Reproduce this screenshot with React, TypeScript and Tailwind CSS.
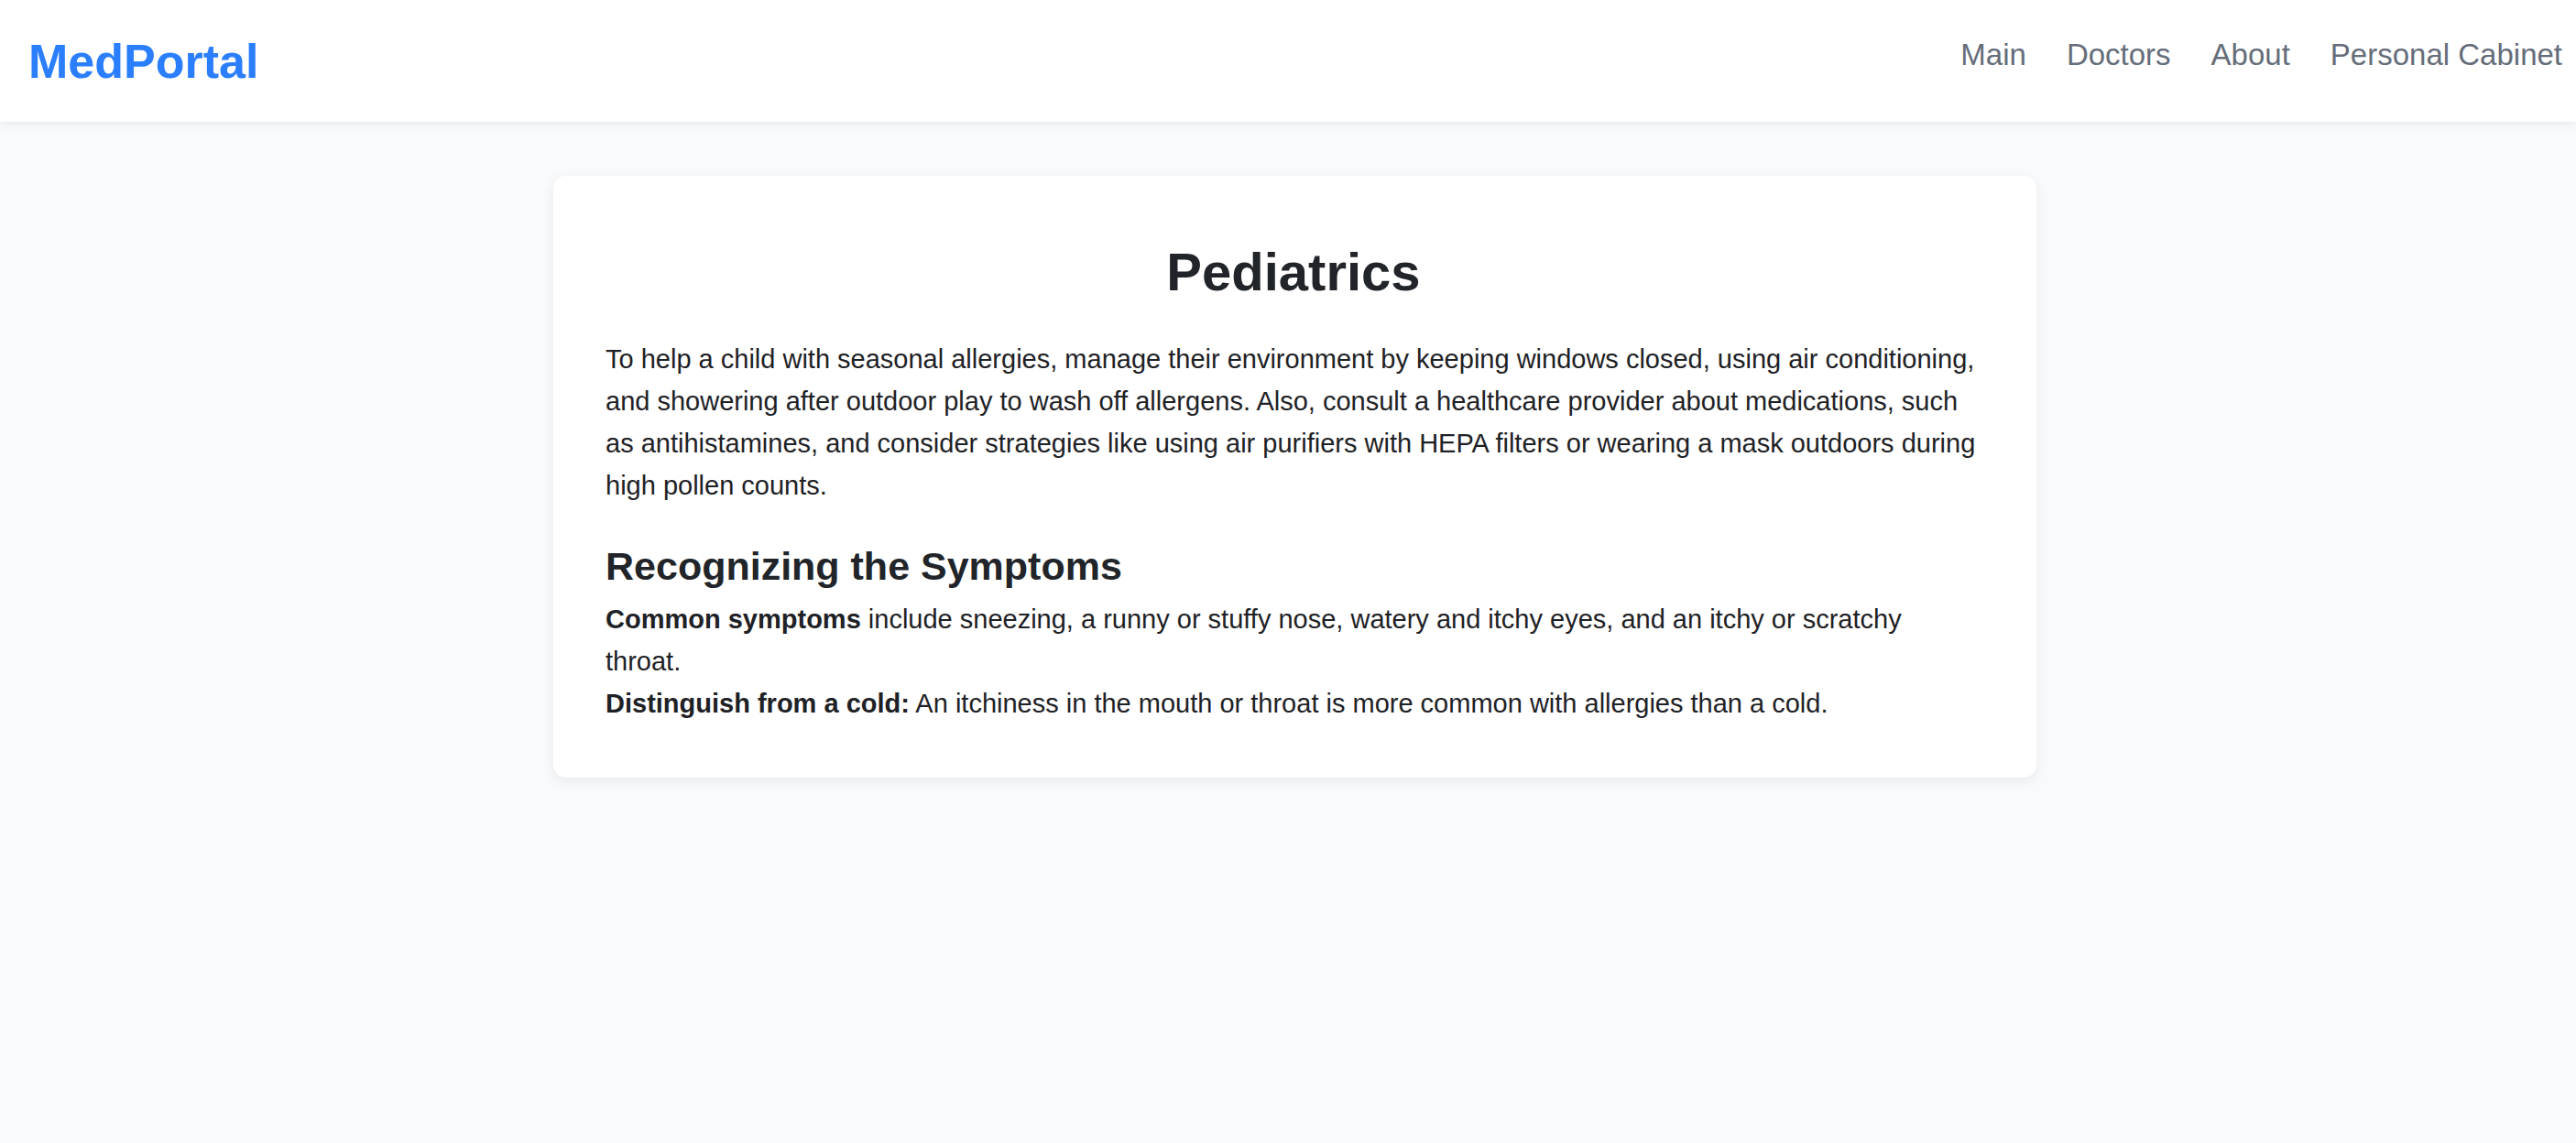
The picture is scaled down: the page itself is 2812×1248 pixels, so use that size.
import React from 'react'

const navLinks = ['Main', 'Doctors', 'About', 'Personal Cabinet']

const App = () => {
    return (
        <div className="min-h-screen bg-[#f9fafb] font-['Liberation_Sans',Arial,sans-serif]">
            {/* Header */}
            <header className="h-[133px] bg-white shadow-[0_3px_8px_rgba(0,0,0,0.07)] flex items-center justify-between pl-[31px] pr-[15px]">
                <a href="#" className="text-[52px] font-bold leading-none text-[#2b7fff]">MedPortal</a>
                <nav className="flex items-center gap-[44px] mb-[14px]">
                    {navLinks.map((link) => (
                        <a key={link} href="#" className="text-[33px] font-medium leading-none text-[#656d7a]">
                            {link}
                        </a>
                    ))}
                </nav>
            </header>

            {/* Article card */}
            <main className="flex justify-center pt-[59px] pl-[15px]">
                <article className="w-[1619px] bg-white rounded-[14px] shadow-[0_4px_14px_rgba(0,0,0,0.07)] pl-[57px] pr-[60px] pt-[71px] pb-[58px] text-[#1e2125]">
                    <h1 className="text-[58px] font-bold leading-[68px] text-center text-[#212529] mb-[38px]">Pediatrics</h1>
                    <p className="text-[29px] leading-[46px]">
                        To help a child with seasonal allergies, manage their environment by keeping windows closed, using air conditioning,
                        and showering after outdoor play to wash off allergens. Also, consult a healthcare provider about medications, such
                        as antihistamines, and consider strategies like using air purifiers with HEPA filters or wearing a mask outdoors during
                        high pollen counts.
                    </p>
                    <h2 className="mt-[40px] text-[43px] font-bold leading-[50px] text-[#212529]">Recognizing the Symptoms</h2>
                    <p className="mt-[10px] text-[29px] leading-[46px]">
                        <span className="font-bold">Common symptoms</span> include sneezing, a runny or stuffy nose, watery and itchy eyes, and an itchy or scratchy throat.
                    </p>
                    <p className="text-[29px] leading-[46px]">
                        <span className="font-bold">Distinguish from a cold:</span> An itchiness in the mouth or throat is more common with allergies than a cold.
                    </p>
                </article>
            </main>
        </div>
    )
}

export default App
